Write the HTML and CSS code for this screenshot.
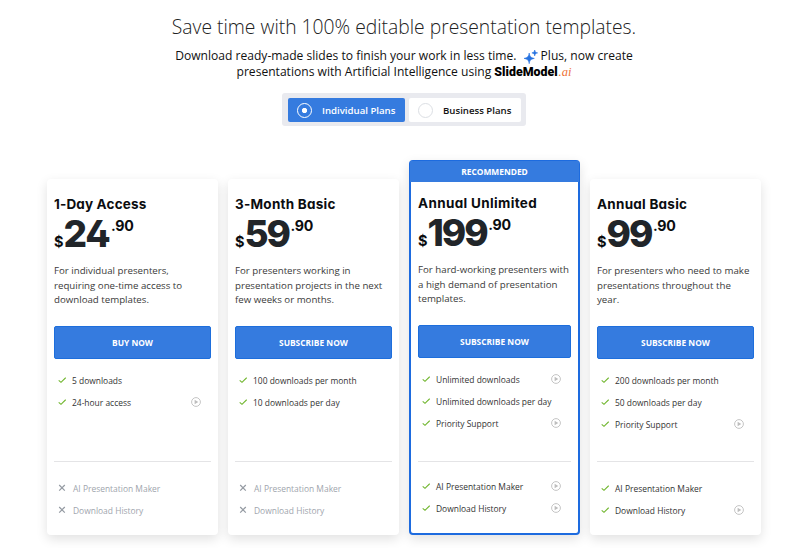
FILE: index.html
```html
<!DOCTYPE html>
<html lang="en">
<head>
    <meta charset="UTF-8">
    <meta name="viewport" content="width=device-width, initial-scale=1.0">
    <title>Plans and Pricing</title>
    <link rel="stylesheet" href="styles.css">
</head>
<body>
    <svg class="sprite" width="0" height="0">
        <symbol id="check" viewBox="0 0 8 8"><path d="M0.7 4.3 3 6.3 7.7 1.7" fill="none" stroke="#6fb52c" stroke-width="1.1"/></symbol>
        <symbol id="cross" viewBox="0 0 8 8"><path d="M1.2 1 6.8 6.6M6.8 1 1.2 6.6" fill="none" stroke="#9399a1" stroke-width="1.2"/></symbol>
        <symbol id="play" viewBox="0 0 10 10"><circle cx="5" cy="5" r="4.4" fill="none" stroke="#c4c4c4"/><path d="M3.6 2.7v4.6l3.7-2.3z" fill="#bdbdbd"/></symbol>
    </svg>

    <header class="intro">
        <h1>Save time with 100% editable presentation templates.</h1>
        <p class="line-one">Download ready-made slides to finish your work in less time. <svg class="sparkle" viewBox="0 0 14 14"><path d="M5.2 3C5.8 6.5 6.6 7.6 10.3 8.4 6.6 9.2 5.8 10.1 5.2 13.7 4.6 10.1 3.8 9.2 0 8.4 3.8 7.6 4.6 6.5 5.2 3ZM10.7 0C11 1.9 11.5 2.5 13.6 2.9 11.5 3.3 11 3.9 10.7 5.9 10.4 3.9 9.9 3.3 7.9 2.9 9.9 2.5 10.4 1.9 10.7 0Z" fill="#2672e0" stroke="#2672e0" stroke-width="0.6"/></svg>Plus, now create</p>
        <p class="line-two">presentations with Artificial Intelligence using <span class="brand">SlideModel</span><span class="brand-ai">.ai</span></p>
    </header>

    <div class="switch">
        <div class="option active"><span class="radio"></span>Individual Plans</div>
        <div class="option"><span class="radio"></span>Business Plans</div>
    </div>

    <main class="plans">
        <section class="card">
            <h2 class="name-day">1-Day Access</h2>
            <div class="price"><span class="currency">$</span><span class="amount amount-24">24</span><span class="cents">.90</span></div>
            <p class="desc">For individual presenters,<br>requiring one-time access to<br>download templates.</p>
            <a class="btn">BUY NOW</a>
            <ul class="features">
                <li><svg><use href="#check"/></svg>5 downloads</li>
                <li><svg><use href="#check"/></svg>24-hour access<svg class="play"><use href="#play"/></svg></li>
            </ul>
            <ul class="extras">
                <li class="off"><svg><use href="#cross"/></svg>AI Presentation Maker</li>
                <li class="off"><svg><use href="#cross"/></svg>Download History</li>
            </ul>
        </section>

        <section class="card">
            <h2>3-Month Basic</h2>
            <div class="price"><span class="currency">$</span><span class="amount">59</span><span class="cents">.90</span></div>
            <p class="desc">For presenters working in<br>presentation projects in the next<br>few weeks or months.</p>
            <a class="btn">SUBSCRIBE NOW</a>
            <ul class="features">
                <li><svg><use href="#check"/></svg>100 downloads per month</li>
                <li><svg><use href="#check"/></svg>10 downloads per day</li>
            </ul>
            <ul class="extras">
                <li class="off"><svg><use href="#cross"/></svg>AI Presentation Maker</li>
                <li class="off"><svg><use href="#cross"/></svg>Download History</li>
            </ul>
        </section>

        <section class="card recommended">
            <div class="ribbon">RECOMMENDED</div>
            <h2 class="name-unlimited">Annual Unlimited</h2>
            <div class="price"><span class="currency">$</span><span class="amount">199</span><span class="cents">.90</span></div>
            <p class="desc">For hard-working presenters with<br>a high demand of presentation<br>templates.</p>
            <a class="btn">SUBSCRIBE NOW</a>
            <ul class="features">
                <li><svg><use href="#check"/></svg>Unlimited downloads<svg class="play"><use href="#play"/></svg></li>
                <li><svg><use href="#check"/></svg>Unlimited downloads per day</li>
                <li><svg><use href="#check"/></svg>Priority Support<svg class="play"><use href="#play"/></svg></li>
            </ul>
            <ul class="extras">
                <li><svg><use href="#check"/></svg>AI Presentation Maker<svg class="play"><use href="#play"/></svg></li>
                <li><svg><use href="#check"/></svg>Download History<svg class="play"><use href="#play"/></svg></li>
            </ul>
        </section>

        <section class="card">
            <h2>Annual Basic</h2>
            <div class="price"><span class="currency">$</span><span class="amount">99</span><span class="cents">.90</span></div>
            <p class="desc">For presenters who need to make<br>presentations throughout the<br>year.</p>
            <a class="btn">SUBSCRIBE NOW</a>
            <ul class="features">
                <li><svg><use href="#check"/></svg>200 downloads per month</li>
                <li><svg><use href="#check"/></svg>50 downloads per day</li>
                <li><svg><use href="#check"/></svg>Priority Support<svg class="play"><use href="#play"/></svg></li>
            </ul>
            <ul class="extras">
                <li><svg><use href="#check"/></svg>AI Presentation Maker</li>
                <li><svg><use href="#check"/></svg>Download History<svg class="play"><use href="#play"/></svg></li>
            </ul>
        </section>
    </main>
</body>
</html>
```
FILE: styles.css
```css
* {
    box-sizing: border-box;
}
body {
    margin: 0;
    height: 548px;
    overflow: hidden;
    background-color: #fff;
    color: #111;
    font-family: "Open Sans", sans-serif;
}
h1, h2, p, ul {
    margin: 0;
    padding: 0;
}
.sprite {
    display: block;
}
.intro {
    height: 93px;
    padding-top: 13px;
    padding-left: 8px;
    text-align: center;
    white-space: nowrap;
}
h1 {
    font-size: 19.3px;
    font-weight: 300;
    line-height: 28px;
    color: #222;
}
.intro p {
    font-size: 12.08px;
    line-height: 16px;
}
.intro .line-one {
    margin-top: 7px;
}
.sparkle {
    width: 14px;
    height: 14px;
    margin: 0 3px 0 4px;
    vertical-align: -4px;
}
.brand {
    font-family: Roboto, sans-serif;
    font-size: 12.4px;
    font-weight: 900;
    color: #000;
}
.brand-ai {
    margin-left: 1px;
    font-family: "Liberation Serif", serif;
    font-size: 12.5px;
    font-style: italic;
    color: #ee7135;
}
.switch {
    display: flex;
    gap: 4px;
    width: 244px;
    height: 33px;
    margin-left: 282px;
    padding: 5px 5px 5px 6px;
    border-radius: 3px;
    background-color: #e9eaef;
}
.option {
    display: flex;
    align-items: center;
    width: 112px;
    height: 24px;
    padding-left: 9px;
    border-radius: 2px;
    background-color: #fff;
    font-size: 9.65px;
    font-weight: 600;
    white-space: nowrap;
}
.option.active {
    width: 117px;
    background-color: #357bdf;
    color: #fff;
}
.radio {
    width: 15px;
    height: 15px;
    margin-right: 10px;
    border: 1px solid #dcdfe4;
    border-radius: 50%;
}
.active .radio {
    border: 1.5px solid #fff;
    background: radial-gradient(circle, #fff 2.2px, transparent 3px);
}
.plans {
    display: grid;
    grid-template-columns: repeat(4, 171px);
    gap: 10px;
    align-items: end;
    height: 375px;
    margin: 34px 0 0 47px;
}
.card {
    height: 356px;
    padding: 15px 7px 0;
    border-radius: 4px;
    background-color: #fff;
    box-shadow: 0 4px 12px rgba(0, 0, 0, 0.12);
    white-space: nowrap;
}
.card h2, .price {
    font-family: Inter, sans-serif;
    font-feature-settings: "cv11", "cv02";
    font-weight: 700;
    color: #0b0d10;
}
.card h2 {
    height: 20px;
    font-size: 13.5px;
    line-height: 20px;
    letter-spacing: 0.25px;
}
.card .name-unlimited {
    letter-spacing: 0.34px;
}
.card .name-day {
    letter-spacing: 0.15px;
}
.price {
    display: flex;
    height: 40px;
}
.currency {
    font-size: 14.5px;
    line-height: 55px;
}
.amount {
    font-size: 37px;
    font-weight: 800;
    line-height: 39px;
    letter-spacing: -2px;
    color: #212529;
}
.amount-24 {
    letter-spacing: -1.2px;
}
.cents {
    margin-left: 1.5px;
    font-size: 14.2px;
    line-height: 24px;
    letter-spacing: -0.3px;
}
.desc {
    margin-top: 10px;
    font-size: 9.7px;
    line-height: 14.5px;
    color: #3a3a3a;
}
.btn {
    display: flex;
    align-items: center;
    justify-content: center;
    height: 33px;
    margin-top: 18px;
    border: 1px solid #1d6edc;
    border-radius: 2px;
    background-color: #357bdf;
    color: #fff;
    font-size: 8.4px;
    font-weight: 700;
}
.features, .extras {
    list-style: none;
}
.features {
    height: 103px;
    padding-top: 10.5px;
    border-bottom: 1px solid #e4e4e6;
}
.extras {
    padding-top: 15.5px;
}
li {
    display: flex;
    align-items: center;
    height: 22px;
    padding: 0 10px 0 4px;
    font-size: 8.45px;
    color: #333;
}
li svg {
    width: 8px;
    height: 8px;
    margin-right: 6px;
}
li .play {
    width: 10px;
    height: 10px;
    margin: 0 0 0 auto;
}
.off {
    color: #a0a5ad;
}
.off svg {
    margin-right: 7px;
}
.recommended {
    height: 375px;
    padding: 0 7px;
    border: 2px solid #1d6bdf;
}
.ribbon {
    height: 21px;
    margin: -1px -8px 11px;
    background-color: #357bdf;
    color: #fff;
    font-size: 8.4px;
    font-weight: 700;
    line-height: 21px;
    text-align: center;
}
.recommended .features {
    height: 104px;
}
.recommended .extras {
    padding-top: 13.5px;
}
```
